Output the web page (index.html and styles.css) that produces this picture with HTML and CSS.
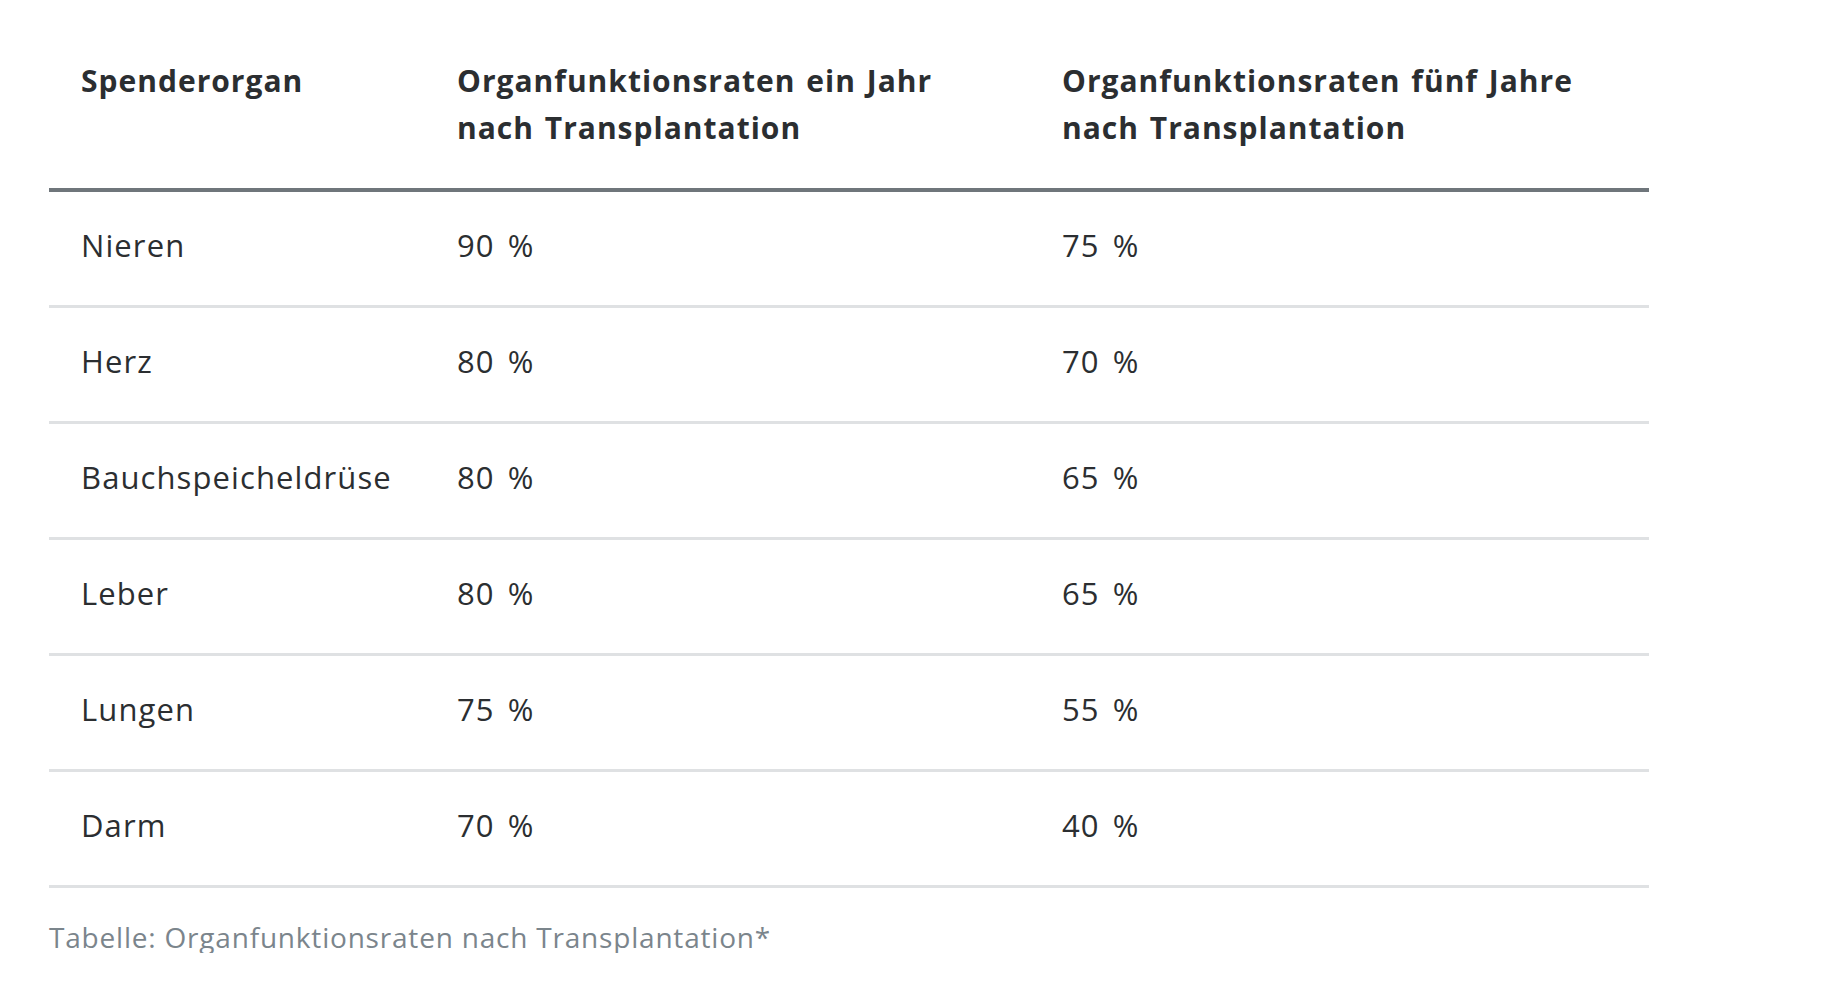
FILE: index.html
```html
<!DOCTYPE html>
<html lang="de">
<head>
<meta charset="utf-8">
<title>Organfunktionsraten</title>
<link rel="stylesheet" href="styles.css">
</head>
<body>
<figure class="figure">
  <table class="rates">
    <thead>
      <tr>
        <th class="c1">Spenderorgan</th>
        <th class="c2">Organfunktionsraten ein Jahr nach Transplantation</th>
        <th class="c3">Organfunktionsraten fünf Jahre nach Transplantation</th>
      </tr>
    </thead>
    <tbody>
      <tr><td>Nieren</td><td>90 %</td><td>75 %</td></tr>
      <tr><td>Herz</td><td>80 %</td><td>70 %</td></tr>
      <tr><td>Bauchspeicheldrüse</td><td>80 %</td><td>65 %</td></tr>
      <tr><td>Leber</td><td>80 %</td><td>65 %</td></tr>
      <tr><td>Lungen</td><td>75 %</td><td>55 %</td></tr>
      <tr><td>Darm</td><td>70 %</td><td>40 %</td></tr>
    </tbody>
  </table>
  <figcaption class="caption">Tabelle: Organfunktionsraten nach Transplantation*</figcaption>
</figure>
</body>
</html>
```
FILE: styles.css
```css
html, body {
  margin: 0;
  padding: 0;
  background: #ffffff;
}
body {
  font-family: "Open Sans", "Lato", sans-serif;
  color: #2b2e31;
}
.figure {
  margin: 0;
  padding: 34px 0 0 49px;
  width: 1600px;
}
.rates {
  width: 1600px;
  border-collapse: collapse;
  table-layout: fixed;
}
.rates th {
  font-weight: 700;
  font-size: 30px;
  line-height: 47px;
  letter-spacing: 1px;
  word-spacing: 2px;
  text-align: left;
  vertical-align: top;
  padding: 23px 32px 37px 32px;
  border-bottom: 4px solid #6f767b;
}
.rates th.c1 { width: 312px; }
.rates th.c2 { width: 541px; }
.rates td {
  font-size: 31px;
  line-height: 40px;
  letter-spacing: 1.1px;
  word-spacing: 4px;
  padding: 33px 32px 40px 32px;
  border-bottom: 3px solid #dfe1e3;
  vertical-align: middle;
}
.caption {
  margin-top: 33px;
  font-size: 28px;
  line-height: 32px;
  letter-spacing: 0.8px;
  color: #7b858c;
}
```
